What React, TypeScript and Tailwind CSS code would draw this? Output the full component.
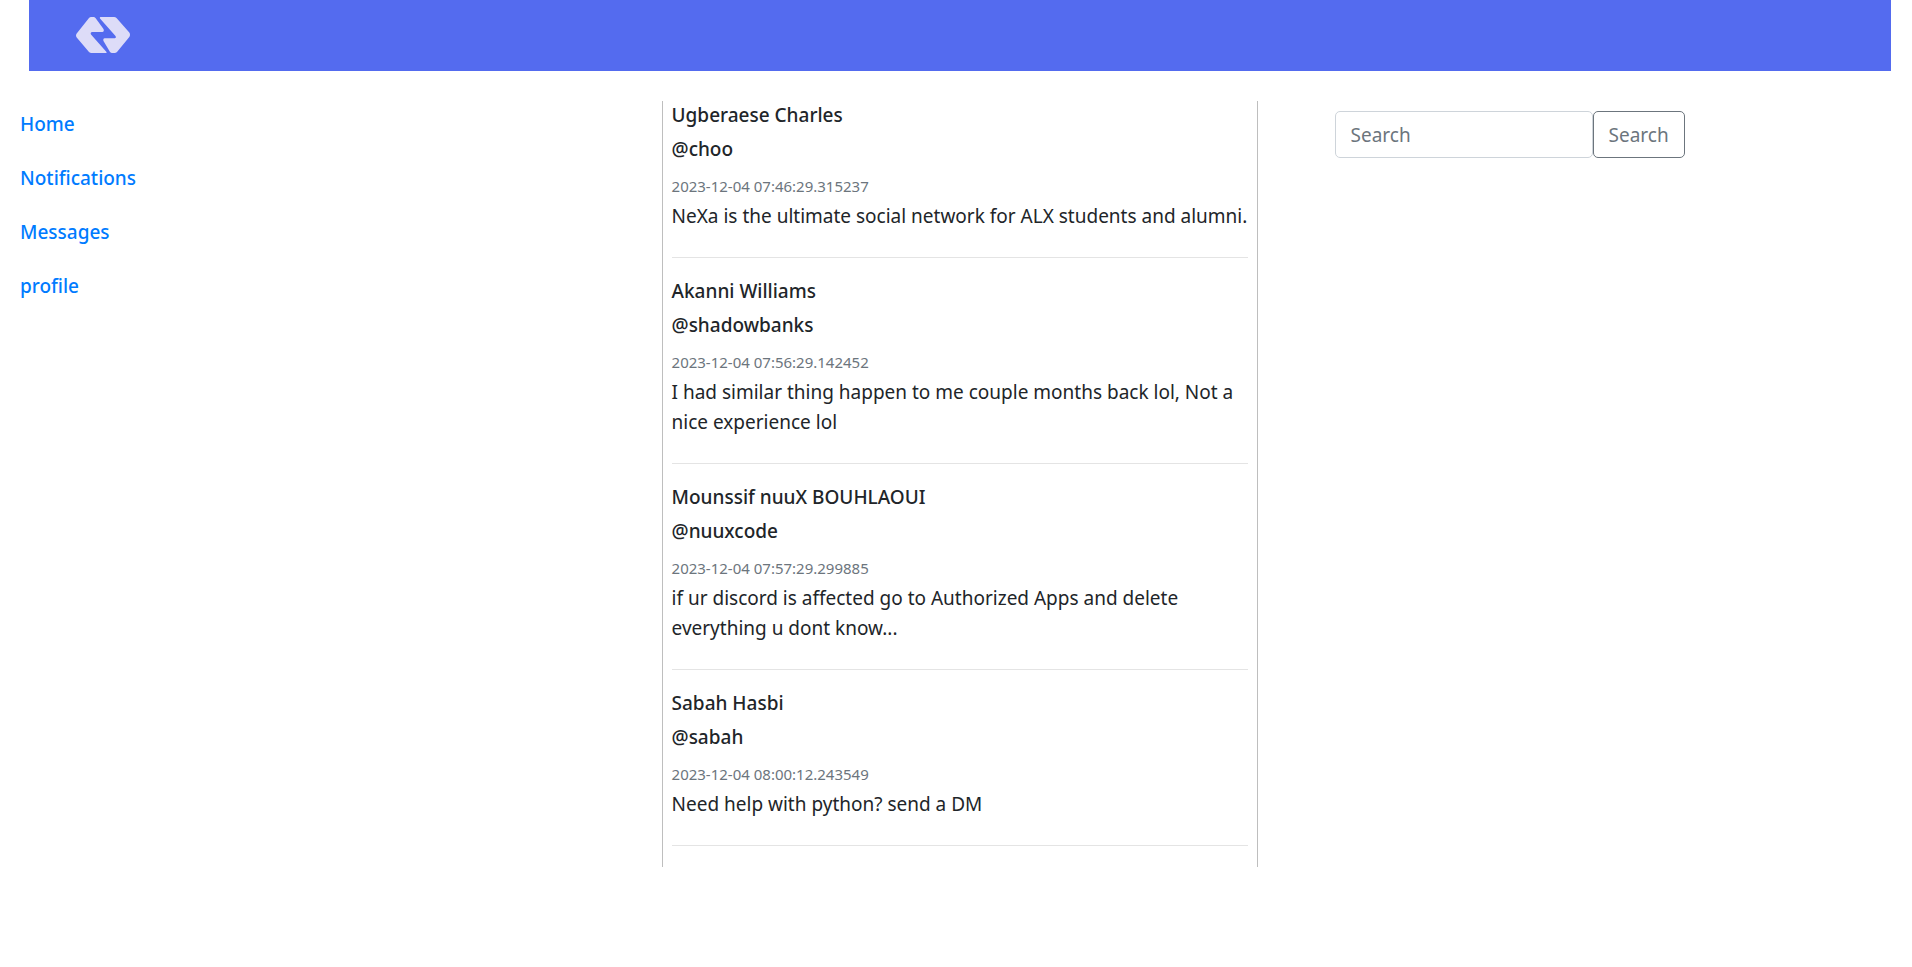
import React from "react";

type Post = { name: string; handle: string; time: string; body: string };

const posts: Post[] = [
  {
    name: "Ugberaese Charles",
    handle: "@choo",
    time: "2023-12-04 07:46:29.315237",
    body: "NeXa is the ultimate social network for ALX students and alumni.",
  },
  {
    name: "Akanni Williams",
    handle: "@shadowbanks",
    time: "2023-12-04 07:56:29.142452",
    body: "I had similar thing happen to me couple months back lol, Not a nice experience lol",
  },
  {
    name: "Mounssif nuuX BOUHLAOUI",
    handle: "@nuuxcode",
    time: "2023-12-04 07:57:29.299885",
    body: "if ur discord is affected go to Authorized Apps and delete everything u dont know...",
  },
  {
    name: "Sabah Hasbi",
    handle: "@sabah",
    time: "2023-12-04 08:00:12.243549",
    body: "Need help with python? send a DM",
  },
];

const links = ["Home", "Notifications", "Messages", "profile"];

function Logo() {
  return (
    <svg viewBox="0 0 54 36" className="block h-9 w-[54px]" fill="#dddcf8" aria-hidden="true">
      <path d="M15 0h2.500q1.200 0 2 1l8 11q1 2.500-1 3H16q-2 .5-1 2.500l15.500 17.500q.2 1-.5 1H15.500q-1.500 0-2.500-1L.7 20.500q-1.400-2 0-4L13 1q1-1 2-1Z" />
      <path d="M24.500 0h13.500q1.500 0 2.500 1l12.800 14.500q1.400 2 0 4.500L41 35q-1 1-2.500 1h-2.500q-1 0-2-1l-6.500-11q-.8-2.500 1-2.800h10.500q1.500-.5.5-2.200L24 1.500q-.5-1.500.5-1.500Z" />
    </svg>
  );
}

export default function App() {
  return (
    <div className="font-['Noto_Sans','Open_Sans',sans-serif] text-[19px] leading-[30px] text-[#212529]">
      <header className="ml-[1.5%] mr-[1.1%] flex bg-[#546bef] pb-[18px] pl-[47px] pt-[17px]">
        <a href="#" aria-label="NeXa home">
          <Logo />
        </a>
      </header>
      <div className="mt-[30px] flex items-start">
        <nav className="w-[34.6%] pl-5 pt-2">
          <ul className="flex flex-col gap-6">
            {links.map((label) => (
              <li key={label}>
                <a href="#" className="font-medium text-[#007bff]">
                  {label}
                </a>
              </li>
            ))}
          </ul>
        </nav>
        <main className="w-[31.2%] border-x border-[#bebebe] px-[9px] pt-0.5">
          {posts.map((post) => (
            <article key={post.handle} className="mb-[21px] border-b border-[#e4e4e4] pb-[26px]">
              <h2 className="mb-[10px] font-medium leading-6">{post.name}</h2>
              <h3 className="mb-[10px] font-medium leading-6">{post.handle}</h3>
              <p className="text-[15px] leading-[30px] text-[#6c757d]">{post.time}</p>
              <p>{post.body}</p>
            </article>
          ))}
        </main>
        <form className="ml-[4%] flex pt-[10px]" onSubmit={(e) => e.preventDefault()}>
          <input
            type="search"
            aria-label="Search"
            placeholder="Search"
            className="h-[47px] w-[258px] rounded-[5px] border border-[#ced4da] px-[15px] placeholder:text-[#6c757d]"
          />
          <button
            type="submit"
            className="h-[47px] rounded-[5px] border border-[#6c757d] px-[15px] text-[#6c757d]"
          >
            Search
          </button>
        </form>
      </div>
    </div>
  );
}
